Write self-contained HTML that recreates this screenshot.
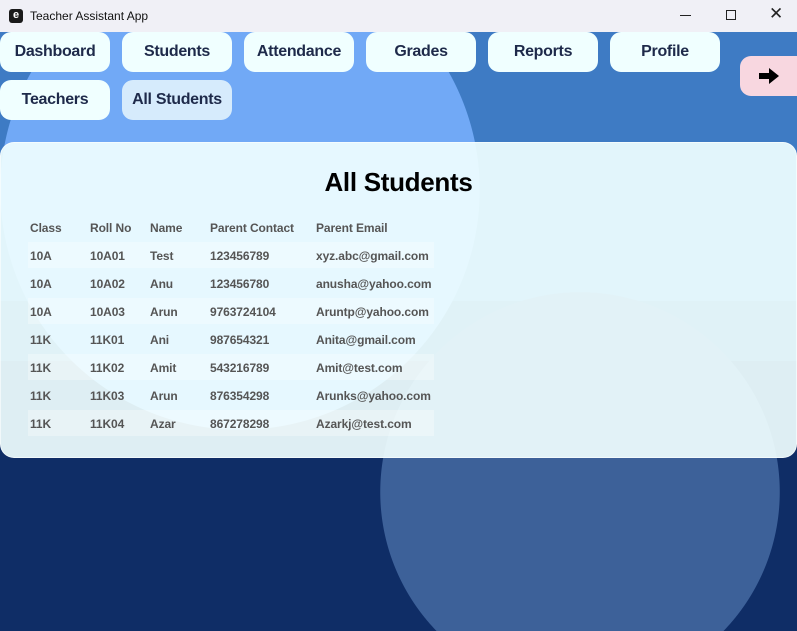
<!DOCTYPE html>
<html style="width:797px;height:631px;overflow:hidden"><head><meta charset="utf-8"><style>
*{margin:0;padding:0;box-sizing:border-box}
body{width:797px;height:631px;overflow:hidden;font-family:"Liberation Sans",sans-serif;background:#0f2d66}
#w{position:relative;width:797px;height:631px;overflow:hidden;background:#0f2d66}
.bg{position:absolute;left:0;width:797px}
.c{position:absolute;border-radius:50%}
.title{position:absolute;top:0;left:0;width:797px;height:32px;background:#f0f0f6;font-size:12px;color:#111}
.btn{position:absolute;width:110px;height:40px;border-radius:11px;background:#f0ffff;color:#1e2a4a;font-weight:bold;font-size:16px;letter-spacing:-0.3px;display:flex;align-items:center;justify-content:center}
.panel{position:absolute;left:0;top:142px;width:797px;height:316px;border-radius:14px;background:rgba(240,255,255,0.92);border:1px solid rgba(255,255,255,0.6)}
.t{position:absolute;font-size:12px;font-weight:bold;color:#555;letter-spacing:-0.1px}
.row{position:absolute;left:28px;width:406px;height:26px;background:rgba(255,255,255,0.3)}
</style></head><body><div id="w">
<div class="bg" style="top:32px;height:269px;background:#3e7bc4"></div>
<div class="bg" style="top:301px;height:60px;background:#2d5a9e"></div>
<div style="position:absolute;left:0;top:32px;width:480px;height:398px;background:radial-gradient(circle 240px at 240px 158px,#71a9f6 239.5px,transparent 240px)"></div>
<div style="position:absolute;left:380px;top:292px;width:400px;height:339px;background:radial-gradient(circle 200px at 200px 200px,#3d6199 199.5px,transparent 200px)"></div>
<div class="title"><div style="position:absolute;left:9px;top:9px;width:14px;height:14px;border-radius:3px;background:#1a1a1a;color:#fff;font-size:11px;line-height:13px;text-align:center;font-weight:bold">e</div><div style="position:absolute;left:30px;top:9px">Teacher Assistant App</div>
<div style="position:absolute;left:680px;top:15px;width:11px;height:1px;background:#222"></div>
<div style="position:absolute;left:726px;top:10px;width:10px;height:10px;border:1px solid #222"></div>
<div style="position:absolute;left:769px;top:4px;font-size:17px;color:#222">✕</div></div>
<div class="btn" style="left:0;top:32px">Dashboard</div>
<div class="btn" style="left:122px;top:32px">Students</div>
<div class="btn" style="left:244px;top:32px">Attendance</div>
<div class="btn" style="left:366px;top:32px">Grades</div>
<div class="btn" style="left:488px;top:32px">Reports</div>
<div class="btn" style="left:610px;top:32px">Profile</div>
<div class="btn" style="left:0;top:80px">Teachers</div>
<div class="btn" style="left:122px;top:80px;background:#d6ebfc">All Students</div>
<div class="btn" style="left:740px;top:56px;width:57px;border-radius:11px 0 0 11px;background:#f8d7e0"><svg width="22" height="18" viewBox="0 0 22 18"><path d="M1 6h10V1l10 8-10 8v-5H1z" fill="#000"/></svg></div>
<div class="panel"></div>
<div style="position:absolute;left:0;width:797px;top:167px;text-align:center;font-size:26px;font-weight:bold;color:#000;letter-spacing:-0.3px">All Students</div>
<div class="row" style="top:242px"></div><div class="row" style="top:298px"></div><div class="row" style="top:354px"></div><div class="row" style="top:410px"></div>
<div class="t" style="left:30px;top:221px">Class</div><div class="t" style="left:90px;top:221px">Roll No</div><div class="t" style="left:150px;top:221px">Name</div><div class="t" style="left:210px;top:221px">Parent Contact</div><div class="t" style="left:316px;top:221px">Parent Email</div>
<div class="t" style="left:30px;top:249px">10A</div><div class="t" style="left:90px;top:249px">10A01</div><div class="t" style="left:150px;top:249px">Test</div><div class="t" style="left:210px;top:249px">123456789</div><div class="t" style="left:316px;top:249px">xyz.abc@gmail.com</div>
<div class="t" style="left:30px;top:277px">10A</div><div class="t" style="left:90px;top:277px">10A02</div><div class="t" style="left:150px;top:277px">Anu</div><div class="t" style="left:210px;top:277px">123456780</div><div class="t" style="left:316px;top:277px">anusha@yahoo.com</div>
<div class="t" style="left:30px;top:305px">10A</div><div class="t" style="left:90px;top:305px">10A03</div><div class="t" style="left:150px;top:305px">Arun</div><div class="t" style="left:210px;top:305px">9763724104</div><div class="t" style="left:316px;top:305px">Aruntp@yahoo.com</div>
<div class="t" style="left:30px;top:333px">11K</div><div class="t" style="left:90px;top:333px">11K01</div><div class="t" style="left:150px;top:333px">Ani</div><div class="t" style="left:210px;top:333px">987654321</div><div class="t" style="left:316px;top:333px">Anita@gmail.com</div>
<div class="t" style="left:30px;top:361px">11K</div><div class="t" style="left:90px;top:361px">11K02</div><div class="t" style="left:150px;top:361px">Amit</div><div class="t" style="left:210px;top:361px">543216789</div><div class="t" style="left:316px;top:361px">Amit@test.com</div>
<div class="t" style="left:30px;top:389px">11K</div><div class="t" style="left:90px;top:389px">11K03</div><div class="t" style="left:150px;top:389px">Arun</div><div class="t" style="left:210px;top:389px">876354298</div><div class="t" style="left:316px;top:389px">Arunks@yahoo.com</div>
<div class="t" style="left:30px;top:417px">11K</div><div class="t" style="left:90px;top:417px">11K04</div><div class="t" style="left:150px;top:417px">Azar</div><div class="t" style="left:210px;top:417px">867278298</div><div class="t" style="left:316px;top:417px">Azarkj@test.com</div>
</div></body></html>
